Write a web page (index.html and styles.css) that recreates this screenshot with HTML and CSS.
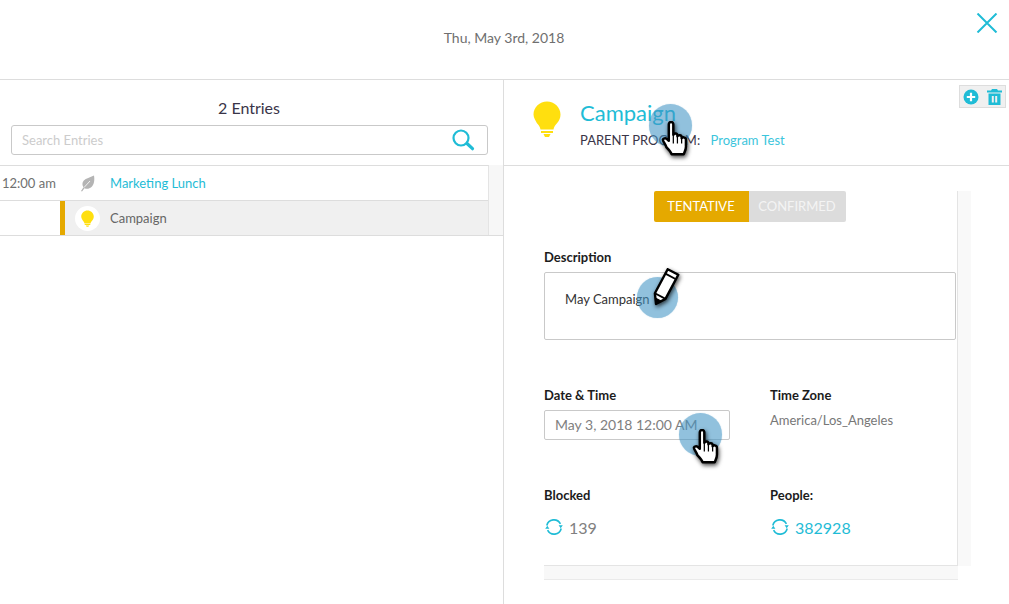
FILE: index.html
```html
<!DOCTYPE html>
<html lang="en">
<head>
    <meta charset="UTF-8">
    <title>Calendar Entry</title>
    <link rel="stylesheet" href="styles.css">
</head>
<body>
    <svg class="defs" width="0" height="0">
        <defs>
            <symbol id="bulb" viewBox="0 0 28 36">
                <path fill="#ffdf0f" d="M14 0.500c7.300 0 13.500 5.700 13.500 13 0 3.500-1.400 6.200-3.300 8.600-1.800 2.200-3.400 3.900-3.700 6.400h-13c-.3-2.500-1.900-4.200-3.700-6.400C2.900 19.700 .5 17 .5 13.500 .5 6.200 6.700 .5 14 .5z"/>
                <path fill="#ffdf0f" d="M8 30h12v2H8zM10.500 33h7l-1.500 3h-4z"/>
            </symbol>
            <symbol id="sync" viewBox="0 0 18 18">
                <path fill="none" stroke="#1fbcd6" stroke-width="1.600" d="M1.800 7.500A7.300 7.300 0 0 1 15.400 5.800M16.200 10.500A7.300 7.300 0 0 1 2.600 12.200"/>
                <path fill="#1fbcd6" d="M13.600 7.200h4.200l-2.100 3zM.2 10.800h4.200l-2.100-3z"/>
            </symbol>
            <symbol id="hand" viewBox="0 0 31 38">
                <path fill="#fff" stroke="#000" stroke-width="2.400" stroke-linejoin="round" d="M8 3.200C8 1.900 9 1 10.200 1s2.200 .9 2.200 2.200v10.300c.3-1 1.200-1.500 2.200-1.400 1 .1 1.800 .9 1.800 2v.8c.4-.8 1.300-1.200 2.300-1.100 1.100 .1 1.800 .9 1.800 1.900v1c.6-.6 1.400-.9 2.300-.7 1.100 .2 1.900 1 1.900 2.200v6.800c0 3-1 4.700-2.200 7.500H10.800c-1-2.700-3-4.700-5-6.700C4.200 21.500 1.800 19.500 2.300 18c.5-1.300 2.500-1.400 3.600-.6L8 19.200z"/>
                <path fill="none" stroke="#000" stroke-width="1.200" d="M12.400 14v8M16.400 15v7M20.500 16v6"/>
            </symbol>
        </defs>
    </svg>

    <header class="top-bar">
        <span class="top-date">Thu, May 3rd, 2018</span>
        <svg class="close-icon" width="22" height="20" viewBox="0 0 22 20">
            <path fill="none" stroke="#1fbcd6" stroke-width="2" d="M1.500 .5l19 19M20.500 .5l-19 19"/>
        </svg>
    </header>

    <main class="columns">
        <section class="entries">
            <h2 class="entries-title">2 Entries</h2>
            <div class="search-box">
                <span class="search-text">Search Entries</span>
                <svg width="23" height="22" viewBox="0 0 23 22">
                    <circle cx="9" cy="9" r="7.500" fill="none" stroke="#1fbcd6" stroke-width="2.200"/>
                    <path stroke="#1fbcd6" stroke-width="3.200" stroke-linecap="round" d="M15 14.500l5.500 5.200"/>
                </svg>
            </div>
            <div class="entry-list">
                <ul class="rows">
                    <li class="row row-first">
                        <span class="row-time">12:00 am</span>
                        <span class="row-icon">
                            <svg width="15" height="17" viewBox="0 0 15 17">
                                <path fill="#b4b4b4" d="M14 .5c.8 4.500 .2 9-2.500 11.500-2.200 2-4.800 2.200-7 1.200L2 16.500 1 16l2.500-3.700C2.200 10.500 1.800 7.800 3.800 5.500 6 3 10 2.700 14 .5z"/>
                                <path fill="none" stroke="#fff" stroke-width=".8" d="M4 12.500L10 6"/>
                            </svg>
                        </span>
                        <a class="row-link">Marketing Lunch</a>
                    </li>
                    <li class="row row-active">
                        <span class="row-time"></span>
                        <span class="row-icon row-badge">
                            <svg width="13" height="17"><use href="#bulb"/></svg>
                        </span>
                        <span class="row-name">Campaign</span>
                    </li>
                </ul>
                <div class="list-track"></div>
            </div>
        </section>

        <section class="detail">
            <div class="detail-head">
                <svg class="head-bulb" width="28" height="36"><use href="#bulb"/></svg>
                <div>
                    <h1 class="head-title">Campaign</h1>
                    <p class="head-parent">PARENT PROGRAM: <a class="parent-link">Program Test</a></p>
                </div>
                <div class="head-tools">
                    <svg width="16" height="16" viewBox="0 0 16 16">
                        <circle cx="8" cy="8" r="7.500" fill="#1fbcd6"/>
                        <path stroke="#fff" stroke-width="2.200" d="M8 3.800v8.400M3.800 8h8.400"/>
                    </svg>
                    <svg width="15" height="16" viewBox="0 0 15 16">
                        <path fill="#1fbcd6" d="M5 0h5l1 1.500h4v2H0v-2h4zM1.500 4.500h12V16h-12zM4.800 7v6.500h2V7zm3.400 0v6.500h2V7z" fill-rule="evenodd"/>
                    </svg>
                </div>
            </div>

            <div class="card-wrap">
                <div class="card">
                    <div class="toggle">
                        <span class="toggle-on">TENTATIVE</span>
                        <span class="toggle-off">CONFIRMED</span>
                    </div>
                    <label class="field-label label-desc">Description</label>
                    <div class="desc-box">May Campaign</div>
                    <div class="field-grid grid-date">
                        <div>
                            <label class="field-label">Date &amp; Time</label>
                            <div class="date-input">May 3, 2018 12:00 AM</div>
                        </div>
                        <div>
                            <label class="field-label">Time Zone</label>
                            <div class="zone-text">America/Los_Angeles</div>
                        </div>
                    </div>
                    <div class="field-grid grid-stats">
                        <div>
                            <label class="field-label">Blocked</label>
                            <div class="stat">
                                <svg width="18" height="18"><use href="#sync"/></svg>
                                <span>139</span>
                            </div>
                        </div>
                        <div>
                            <label class="field-label">People:</label>
                            <div class="stat stat-link">
                                <svg width="18" height="18"><use href="#sync"/></svg>
                                <span>382928</span>
                            </div>
                        </div>
                    </div>
                </div>
                <div class="card-track"></div>
            </div>
            <div class="card-foot"></div>
        </section>
    </main>

    <!-- tutorial pointers laid over the page -->
    <div class="spot spot-title"></div>
    <svg class="pointer pointer-title" width="33" height="39"><use href="#hand"/></svg>
    <div class="spot spot-desc"></div>
    <svg class="pointer pointer-pencil" width="30" height="40" viewBox="0 0 30 40">
        <path fill="#fff" stroke="#000" stroke-width="2.400" stroke-linejoin="round" d="M15.700 2.200l10.600 5.600L13.500 31.900 4 37l-1.100-10.700z"/>
        <path fill="none" stroke="#000" stroke-width="1.800" d="M13.400 6.600l10.600 5.600M2.900 26.300l10.600 5.600"/>
        <path fill="#000" stroke="#000" stroke-width="1.200" stroke-linejoin="round" d="M3.700 31.200L9 34l-5 3z"/>
    </svg>
    <div class="spot spot-date"></div>
    <svg class="pointer pointer-date" width="33" height="39"><use href="#hand"/></svg>
</body>
</html>
```

FILE: styles.css
```css
* {
    margin: 0;
    padding: 0;
    box-sizing: border-box;
}
html, body {
    height: 604px;
    overflow: hidden;
}
body {
    background: #fff;
    font-family: "Lato", "Open Sans", sans-serif;
    font-size: 13px;
    color: #666;
    position: relative;
}
.defs {
    position: absolute;
}

/* top bar */
.top-bar {
    height: 80px;
    border-bottom: 1px solid #ddd;
    display: flex;
    align-items: center;
    justify-content: center;
    position: relative;
}
.top-date {
    font-size: 14px;
    color: #6f6f6f;
    margin: 0 1px 4px 0;
}
.close-icon {
    position: absolute;
    top: 13px;
    right: 11px;
}

.columns {
    display: flex;
    height: 524px;
}

/* left column */
.entries {
    width: 504px;
    border-right: 1px solid #ddd;
}
.entries-title {
    font-size: 16px;
    font-weight: 400;
    line-height: 20px;
    color: #3a3548;
    text-align: center;
    padding: 18px 5px 0 0;
}
.search-box {
    margin: 7px 15px 0 11px;
    height: 30px;
    border: 1px solid #c9c9c9;
    border-radius: 3px;
    display: flex;
    align-items: center;
    justify-content: space-between;
    padding: 0 12px 0 10px;
}
.search-text {
    color: #ccc;
}
.entry-list {
    margin-top: 10px;
    display: flex;
    border-bottom: 1px solid #ddd;
}
.rows {
    list-style: none;
    width: 489px;
    border-top: 1px solid #ddd;
    border-right: 1px solid #e4e4e4;
}
.row {
    height: 35px;
    display: flex;
    align-items: center;
}
.row-first {
    height: 34px;
}
.row-active {
    background: linear-gradient(to right, #fff 60px, #e5a900 60px, #e5a900 65px, #f0f0f0 65px);
    border-top: 1px solid #ddd;
    height: 35px;
}
.row-time {
    width: 75px;
    padding-left: 2px;
    color: #707070;
}
.row-icon {
    width: 25px;
    height: 25px;
    display: flex;
    align-items: center;
    justify-content: center;
    margin-right: 10px;
}
.row-badge {
    background: #fff;
    border-radius: 50%;
}
.row-link {
    color: #1fbcd6;
}
.row-name {
    color: #666;
}
.list-track {
    flex: 1;
    background: #f7f7f7;
}

/* right column */
.detail {
    flex: 1;
}
.detail-head {
    height: 86px;
    border-bottom: 1px solid #ddd;
    display: flex;
    padding: 21px 0 0 29px;
    position: relative;
}
.head-bulb {
    margin-right: 19px;
}
.head-title {
    font-size: 22px;
    font-weight: 400;
    line-height: 26px;
    margin-top: -1px;
    color: #1fbcd6;
}
.head-parent {
    margin-top: 6px;
    line-height: 16px;
    color: #3a3548;
}
.parent-link {
    color: #3cc5dc;
    margin-left: 7px;
}
.head-tools {
    position: absolute;
    top: 5px;
    right: 3px;
    width: 47px;
    height: 23px;
    background: #f0f0f0;
    border: 1px solid #ddd;
    display: flex;
    align-items: center;
    justify-content: space-between;
    padding: 0 3px 0 3px;
}

.card-wrap {
    display: flex;
    margin: 25px 0 0 40px;
    height: 375px;
}
.card {
    width: 414px;
    border-right: 1px solid #e4e4e4;
    border-bottom: 1px solid #e4e4e4;
}
.card-track {
    width: 13px;
    background: #f9f9f9;
}
.card-foot {
    width: 414px;
    height: 14px;
    margin-left: 40px;
    background: #f8f8f8;
    border-bottom: 1px solid #eaeaea;
}

.toggle {
    display: flex;
    justify-content: center;
    height: 31px;
    line-height: 31px;
    padding-right: 2px;
    color: #fff;
}
.toggle-on {
    width: 95px;
    text-align: center;
    background: #e5a900;
    border-radius: 2px 0 0 2px;
}
.toggle-off {
    width: 97px;
    text-align: center;
    background: #dcdcdc;
    color: #f4f4f4;
    border-radius: 0 2px 2px 0;
}

.field-label {
    display: block;
    line-height: 18px;
    font-weight: 700;
    font-size: 13px;
    color: #1c1c1c;
}
.label-desc {
    margin-top: 26px;
}
.desc-box {
    width: 412px;
    height: 68px;
    margin-top: 6px;
    border: 1px solid #c9c9c9;
    border-radius: 2px;
    padding: 17px 20px;
    line-height: 18px;
    color: #333;
}
.field-grid {
    display: grid;
    grid-template-columns: 226px 1fr;
}
.grid-date {
    margin-top: 46px;
}
.grid-stats {
    margin-top: 46px;
}
.date-input {
    width: 186px;
    height: 30px;
    margin-top: 6px;
    border: 1px solid #c9c9c9;
    border-radius: 2px;
    padding-left: 10px;
    font-size: 14px;
    line-height: 28px;
    color: #808080;
}
.zone-text {
    margin-top: 7px;
    line-height: 18px;
    color: #777;
}
.stat {
    margin-top: 11px;
    height: 24px;
    display: flex;
    align-items: center;
    gap: 6px;
    padding-left: 1px;
    font-size: 16px;
    color: #808080;
}
.stat-link {
    color: #1fbcd6;
}

/* pointers */
.spot {
    position: absolute;
    border-radius: 50%;
    background: rgba(66, 148, 196, .58);
    box-shadow: 0 0 1px rgba(66, 148, 196, .5);
}
.spot-title {
    left: 649px;
    top: 104px;
    width: 43px;
    height: 43px;
}
.spot-desc {
    left: 637px;
    top: 277px;
    width: 41px;
    height: 41px;
}
.spot-date {
    left: 679px;
    top: 413px;
    width: 43px;
    height: 43px;
}
.pointer {
    position: absolute;
    filter: drop-shadow(1px 2px 2px rgba(0, 0, 0, .7));
}
.pointer-title {
    left: 660px;
    top: 121px;
}
.pointer-pencil {
    left: 652px;
    top: 267px;
}
.pointer-date {
    left: 691px;
    top: 429px;
}
```
